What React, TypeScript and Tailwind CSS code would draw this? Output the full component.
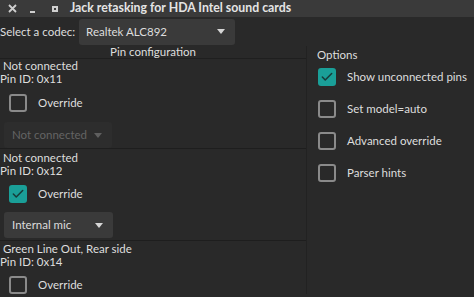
import { Check } from 'lucide-react'

const font = { fontFamily: 'Lato, "Noto Sans", sans-serif' }

function Box({ checked }: { checked?: boolean }) {
  if (checked) {
    return (
      <div className="w-[18px] h-[18px] shrink-0 rounded-[3px] bg-[#1a9f98] flex items-center justify-center">
        <Check size={14} strokeWidth={2.6} className="text-[#173b39]" />
      </div>
    )
  }
  return <div className="w-[18px] h-[18px] shrink-0 rounded-[3px] border-2 border-[#8a8a8a]" />
}

function Caret({ dim }: { dim?: boolean }) {
  return (
    <svg width="8" height="5" viewBox="0 0 8 5" className="shrink-0">
      <path d="M0 0h8L4 5z" fill={dim ? '#5f5f5f' : '#d6d6d6'} />
    </svg>
  )
}

function Combo({ label, dim, w }: { label: string; dim?: boolean; w: string }) {
  return (
    <div
      className={`${w} h-[26px] rounded-[3px] flex items-center justify-between whitespace-nowrap pl-[8px] pr-[10px] ${
        dim ? 'bg-[#2d2d2d] text-[#646464]' : 'bg-[#3a3a3a] text-[#dcdcdc]'
      }`}
    >
      <span>{label}</span>
      <Caret dim={dim} />
    </div>
  )
}

function Override({ checked }: { checked?: boolean }) {
  return (
    <div className="flex items-center gap-[11px] pl-[9px] h-[18px]">
      <Box checked={checked} />
      <span>Override</span>
    </div>
  )
}

function PinHead({ name, id }: { name: string; id: string }) {
  return (
    <div className="leading-[12.5px] whitespace-nowrap">
      <div className="pl-[3px]">{name}</div>
      <div>Pin ID: {id}</div>
    </div>
  )
}

const options: [string, boolean][] = [
  ['Show unconnected pins', true],
  ['Set model=auto', false],
  ['Advanced override', false],
  ['Parser hints', false],
]

export default function App() {
  return (
    <div style={font} className="w-[474px] h-[297px] bg-[#292929] text-[#dedede] text-[11.5px] overflow-hidden">
      <div className="h-[17px] bg-[#3a3a3a] flex items-center text-[#cfcfcf]">
        <span className="w-[8px]" />
        <svg width="9" height="9" viewBox="0 0 9 9">
          <path d="M1 1l7 7M8 1L1 8" stroke="#cfcfcf" strokeWidth="1.8" />
        </svg>
        <span className="w-[13px]" />
        <span className="w-[5px] h-[2px] bg-[#cfcfcf] mt-[6px]" />
        <span className="w-[17px]" />
        <span className="w-[6px] h-[6px] border-2 border-[#cfcfcf]" />
        <span className="ml-[12px] font-bold text-[12.3px] text-[#e4e4e4] whitespace-nowrap">
          Jack retasking for HDA Intel sound cards
        </span>
      </div>

      <div className="flex items-center h-[29px] whitespace-nowrap">
        <span>Select a codec:</span>
        <div className="ml-[4px] w-[156px] h-[26px] bg-[#3a3a3a] rounded-[3px] flex items-center justify-between pl-[7px] pr-[10px]">
          <span>Realtek ALC892</span>
          <Caret />
        </div>
      </div>

      <div className="flex">
        <div className="w-[307px] border-r border-[#222]">
          <div className="text-center leading-[12px]">Pin configuration</div>
          <div className="border-t border-[#1f1f1f] pt-[1px]">
            <div className="border-b border-[#1e1e1e]">
              <PinHead name="Not connected" id="0x11" />
              <div className="mt-[9px]"><Override /></div>
              <div className="mt-[10px] pl-[4px]"><Combo label="Not connected" dim w="w-[108px]" /></div>
            </div>
            <div className="border-b border-[#1e1e1e] pt-[3px] pb-[2px]">
              <PinHead name="Not connected" id="0x12" />
              <div className="mt-[8px]"><Override checked /></div>
              <div className="mt-[9px] pl-[4px]"><Combo label="Internal mic" w="w-[109px]" /></div>
            </div>
            <div className="pt-[2px]">
              <PinHead name="Green Line Out, Rear side" id="0x14" />
              <div className="mt-[8px]"><Override /></div>
            </div>
          </div>
        </div>

        <div className="flex-1 pl-[10px] whitespace-nowrap">
          <div className="leading-[12px] mt-[3px]">Options</div>
          <div className="flex flex-col gap-[14px] mt-[7px] pl-[1px]">
            {options.map(([t, c]) => (
              <div key={t} className="flex items-center gap-[11px] h-[18px]">
                <Box checked={c} />
                <span>{t}</span>
              </div>
            ))}
          </div>
        </div>
      </div>
    </div>
  )
}
